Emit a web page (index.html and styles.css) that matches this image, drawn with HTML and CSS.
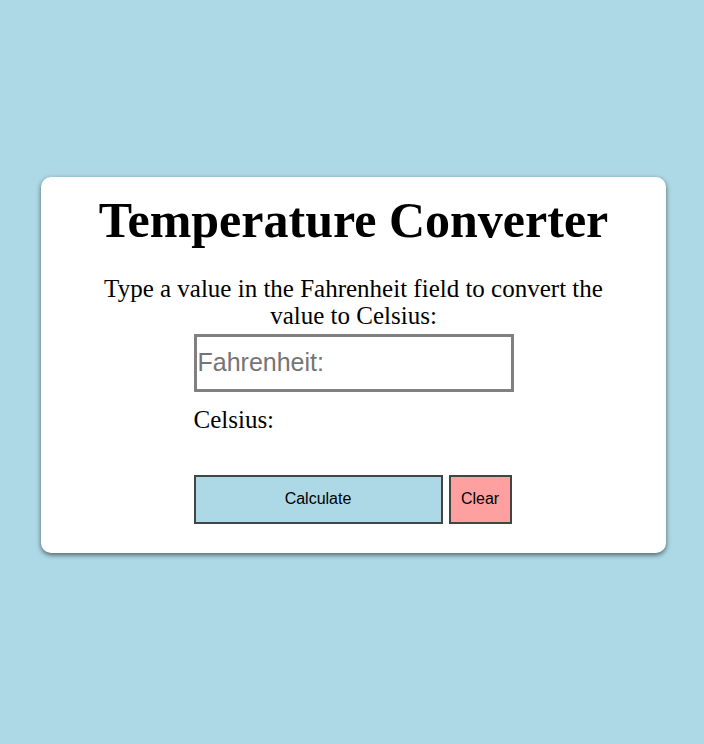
FILE: index.html
```html
<!DOCTYPE html>
<html>
<head>
<meta charset="utf-8">
<link rel="stylesheet" href="styles.css">
</head>
<body>
<div class="card">
  <h1 class="title">Temperature Converter</h1>
  <p class="intro">Type a value in the Fahrenheit field to convert the value to Celsius:</p>
  <div class="form">
    <input class="field" type="text" placeholder="Fahrenheit:">
    <div class="result">Celsius:</div>
    <div class="buttons">
      <button class="btn btn-calc">Calculate</button>
      <button class="btn btn-clear">Clear</button>
    </div>
  </div>
</div>
</body>
</html>
```
FILE: styles.css
```css
html, body {
  margin: 0;
  padding: 0;
}
body {
  background: #add8e6;
  min-height: 744px;
  display: flex;
  align-items: center;
  justify-content: center;
  font-family: "Liberation Serif", "Times New Roman", serif;
}
.card {
  box-sizing: border-box;
  width: 625px;
  margin-left: 3px;
  margin-top: -15px;
  background: #fff;
  border-radius: 10px;
  box-shadow: 0 2px 5px rgba(0, 0, 0, 0.55);
  padding: 15px 0 29px;
  display: flex;
  flex-direction: column;
  align-items: center;
}
.title {
  font-size: 50px;
  font-weight: bold;
  margin: 0;
  line-height: 57px;
}
.intro {
  width: 520px;
  text-align: center;
  font-size: 25px;
  line-height: 27px;
  margin: 26px 0 5px;
}
.form {
  width: 320px;
  display: flex;
  flex-direction: column;
}
.field {
  box-sizing: border-box;
  width: 320px;
  height: 58px;
  border: 3px solid #808080;
  padding: 0 1px;
  margin: 0;
  font-family: "Liberation Sans", Arial, sans-serif;
  font-size: 25px;
  outline: none;
}
.field::placeholder {
  color: #757575;
}
.result {
  font-size: 25px;
  line-height: 27px;
  margin-top: 14px;
  height: 69px;
}
.buttons {
  display: flex;
  gap: 6px;
}
.btn {
  box-sizing: border-box;
  height: 49px;
  border: 2px solid #444;
  font-family: "Liberation Sans", Arial, sans-serif;
  font-size: 16px;
  color: #000;
  padding: 0;
  margin: 0;
}
.btn-calc {
  width: 249px;
  background: #add8e6;
}
.btn-clear {
  width: 63px;
  background: #ffa0a0;
}
```
